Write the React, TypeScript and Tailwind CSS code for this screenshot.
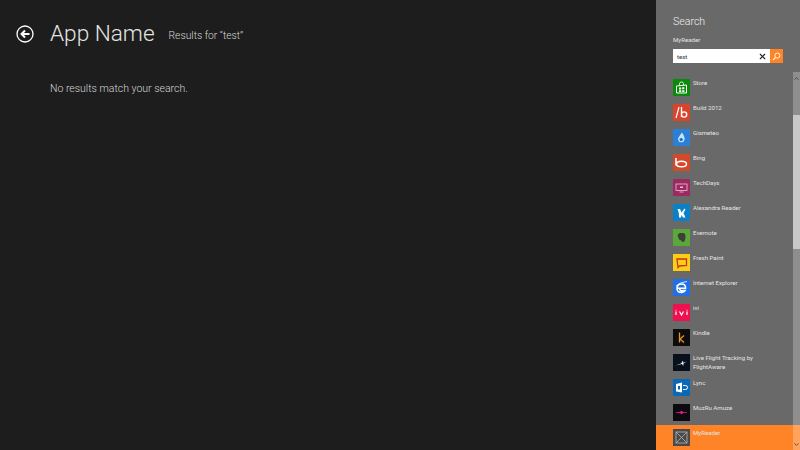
import type { ReactNode } from "react";
import { X, ChevronUp, ChevronDown } from "lucide-react";

const font = "font-['Roboto','Open_Sans',sans-serif]";

interface AppRow {
  name: string;
  bg: string;
  icon: ReactNode;
  active?: boolean;
}

function Glyph({ children }: { children: ReactNode }) {
  return (
    <svg viewBox="0 0 17 17" className="h-[17px] w-[17px]">
      {children}
    </svg>
  );
}

const apps: AppRow[] = [
  {
    name: "Store",
    bg: "bg-[#0a8a0a]",
    icon: (
      <Glyph>
        <path d="M6.500 6.500V4.500Q6.500 3 8.500 3t2 1.500v1.500" fill="none" stroke="#fff" strokeWidth="0.800" />
        <path d="M3.500 7 13.500 6v8h-10z" fill="none" stroke="#fff" strokeWidth="1" />
        <path d="M6 8.500h2.200v2H6zM9.200 8.300h2.200v2H9.200zM6 11.300h2.200v1.700H6zM9.200 11.300h2.200v1.700H9.200z" fill="#fff" />
      </Glyph>
    ),
  },
  {
    name: "Build 2012",
    bg: "bg-[#d9442a]",
    icon: (
      <Glyph>
        <path d="M6 3 3 14" stroke="#fff" strokeWidth="1.200" />
        <path d="M8.500 3v10M8.500 10.500a2.600 2.600 0 1 0 5.200 0a2.600 2.600 0 1 0-5.200 0" fill="none" stroke="#fff" strokeWidth="1.400" />
      </Glyph>
    ),
  },
  {
    name: "Gismeteo",
    bg: "bg-[#2a7fd6]",
    icon: (
      <Glyph>
        <path d="M9 3.500Q12 8 11.700 10.500a3.500 3.500 0 0 1-6.800 0Q5 8.500 9 3.500z" fill="#bfe3fb" />
        <circle cx="8.200" cy="10.500" r="1.600" fill="#1c67b8" />
      </Glyph>
    ),
  },
  {
    name: "Bing",
    bg: "bg-[#d4492a]",
    icon: (
      <Glyph>
        <path d="M3 4v7.500" stroke="#fff" strokeWidth="1.600" />
        <ellipse cx="8.500" cy="10" rx="5" ry="2.800" fill="none" stroke="#fff" strokeWidth="1.500" />
      </Glyph>
    ),
  },
  {
    name: "TechDays",
    bg: "bg-[#9c2a62]",
    icon: (
      <Glyph>
        <rect x="3" y="5" width="11" height="6.500" fill="none" stroke="#f3bcd6" strokeWidth="0.800" />
        <rect x="7" y="7.500" width="3" height="1.500" fill="#f3bcd6" />
        <path d="M6.500 13h4" stroke="#f3bcd6" strokeWidth="0.800" />
      </Glyph>
    ),
  },
  {
    name: "Alexandra Reader",
    bg: "bg-[#0a80c8]",
    icon: (
      <Glyph>
        <path d="M4.500 5 7 5l1.500 3.500L11.500 4.500l1 1L10.500 9l2 4.500H10L8.500 11 8 13.500H6L5.800 9z" fill="#fff" />
      </Glyph>
    ),
  },
  {
    name: "Evernote",
    bg: "bg-[#5aa83a]",
    icon: (
      <Glyph>
        <path d="M4.500 6 6.500 4h4q2 .5 2 3t-.5 4q-.5 2-2 2-1.500 0-1.500-1.500-2.500 0-3-2.500z" fill="#3a3f3a" />
      </Glyph>
    ),
  },
  {
    name: "Fresh Paint",
    bg: "bg-[#fdcf14]",
    icon: (
      <Glyph>
        <path d="M4 5h9.500v6.500L6.500 12 5 13.500z" fill="none" stroke="#c8321f" strokeWidth="1.300" />
      </Glyph>
    ),
  },
  {
    name: "Internet Explorer",
    bg: "bg-[#1f6fe8]",
    icon: (
      <Glyph>
        <path d="M4 9.200h8.500q.3-4.200-4-4.200T4 9.200q0 4.300 4.500 4.300 2.700 0 3.700-2H10q-1 .8-2.300 0-1-.6-1-1.500" fill="none" stroke="#fff" strokeWidth="1.600" />
        <path d="M3 7Q7 3 14 2.500" fill="none" stroke="#fff" strokeWidth="0.800" />
      </Glyph>
    ),
  },
  {
    name: "ivi",
    bg: "bg-[#f0104f]",
    icon: (
      <Glyph>
        <path d="M3 7.500v3.500M6.500 7.500 8.500 11l2-3.500M14 7.500v3.500" fill="none" stroke="#fff" strokeWidth="1.200" />
        <path d="M3 5.800v.8M14 5.800v.8" stroke="#fff" strokeWidth="1" />
      </Glyph>
    ),
  },
  {
    name: "Kindle",
    bg: "bg-[#0c0c0c]",
    icon: (
      <Glyph>
        <path d="M6.500 3.500v10M11 6.500 7 10l4 3.500" fill="none" stroke="#e8942a" strokeWidth="1.300" />
      </Glyph>
    ),
  },
  {
    name: "Live Flight Tracking by FlightAware",
    bg: "bg-[#08101e]",
    icon: (
      <Glyph>
        <path d="M2.500 11.500 8 9.500 10 6.500l.3 2.200 3.500-1.200-3.300 2-.2 2.500-1.300-2z" fill="#e8edf2" />
      </Glyph>
    ),
  },
  {
    name: "Lync",
    bg: "bg-[#0a68b8]",
    icon: (
      <Glyph>
        <path d="M3 5 9 3.500v10L3 12.500z" fill="#fff" />
        <path d="M5 7h2v3.500H5z" fill="#0a68b8" />
        <path d="M10 6.500h2.500a2 2 0 0 1 0 4H10" fill="none" stroke="#fff" strokeWidth="1" />
      </Glyph>
    ),
  },
  {
    name: "MuzRu Amuze",
    bg: "bg-[#0c0a0e]",
    icon: (
      <Glyph>
        <path d="M3 8.500h11" stroke="#e0188c" strokeWidth="0.800" />
        <path d="M6 8.500 8.500 6.800l2.500 1.700-2.500 1.700z" fill="#e0188c" />
      </Glyph>
    ),
  },
  {
    name: "MyReader",
    bg: "bg-[#4a4a4a]",
    active: true,
    icon: (
      <Glyph>
        <rect x="3" y="3" width="11" height="11" fill="none" stroke="#b5b5b5" strokeWidth="0.800" />
        <path d="m3 3 11 11M14 3 3 14" stroke="#b5b5b5" strokeWidth="0.800" />
      </Glyph>
    ),
  },
];

export default function App() {
  return (
    <div className={`${font} relative flex h-[450px] w-[800px] overflow-hidden bg-[#1d1d1d] text-[#e0e0e0]`}>
      {/* Results page */}
      <main className="flex-1 pl-4 pt-[23px]">
        <div className="flex h-[22px] items-center">
          <svg viewBox="0 0 18 18" className="h-[18px] w-[18px]">
            <circle cx="9" cy="9" r="8" fill="none" stroke="#fff" strokeWidth="1.300" />
            <path d="M13.500 9H6M9 5.500 5.500 9 9 12.500" fill="none" stroke="#fff" strokeWidth="2" />
          </svg>
          <h1 className="ml-[16px] text-[22.600px] leading-[22px] font-light text-[#e4e4e4]">App Name</h1>
          <span className="ml-[14px] mt-1 text-[10.300px] font-light text-[#d8d8d8]">Results for “test”</span>
        </div>
        <p className="ml-[34px] mt-[34px] text-[10.500px] leading-[20px] font-light text-[#d4d4d4]">
          No results match your search.
        </p>
      </main>

      {/* Search charm */}
      <aside className="flex w-[144px] flex-col bg-[#696969] text-white">
        <h2 className="ml-[17px] mt-[14px] text-[10.600px] leading-[16px] font-light text-[#f0f0f0]">Search</h2>
        <div className="ml-[17px] mt-[4px] text-[6.100px] leading-[12px] text-[#e4e4e4]">MyReader</div>
        <div className="ml-[17px] mt-[3px] flex h-[14px] w-[110px] items-center bg-white">
          <span className="ml-1 flex-1 pt-px text-[6.100px] text-[#333]">test</span>
          <X size={9} strokeWidth={3} className="mr-[3px] text-[#222]" />
          <div className="flex h-[14px] w-[13px] items-center justify-center bg-[#ff8427]">
            <svg viewBox="0 0 10 10" className="h-[9px] w-[9px]">
              <circle cx="6" cy="4" r="2.800" fill="none" stroke="#fff" strokeWidth="1" />
              <path d="M4 6 1.200 8.800" stroke="#fff" strokeWidth="1.300" />
            </svg>
          </div>
        </div>

        <ul className="mt-[12px] flex-1">
          {apps.map((app) => (
            <li key={app.name} className={`flex h-[25px] pl-[17px] pt-1 ${app.active ? "bg-[#ff8427]" : ""}`}>
              <div className={`flex h-[17px] w-[17px] shrink-0 items-center justify-center ${app.bg}`}>
                {app.icon}
              </div>
              <span className="ml-[3px] w-[88px] text-[6.100px] leading-[8.500px] text-[#e4e4e4]">{app.name}</span>
            </li>
          ))}
        </ul>
      </aside>

      {/* Scrollbar sits over the list */}
      <div className="absolute right-0 top-[72px] flex h-[378px] w-[7px] flex-col bg-white/25">
        <div className="flex h-[12px] items-center justify-center">
          <ChevronUp size={7} strokeWidth={2.500} className="text-[#333]" />
        </div>
        <div className="mt-[31px] h-[134px] bg-[#c8c8c8]" />
        <div className="flex-1" />
        <div className="flex h-[12px] items-center justify-center">
          <ChevronDown size={7} strokeWidth={2.500} className="text-[#333]" />
        </div>
      </div>
    </div>
  );
}
